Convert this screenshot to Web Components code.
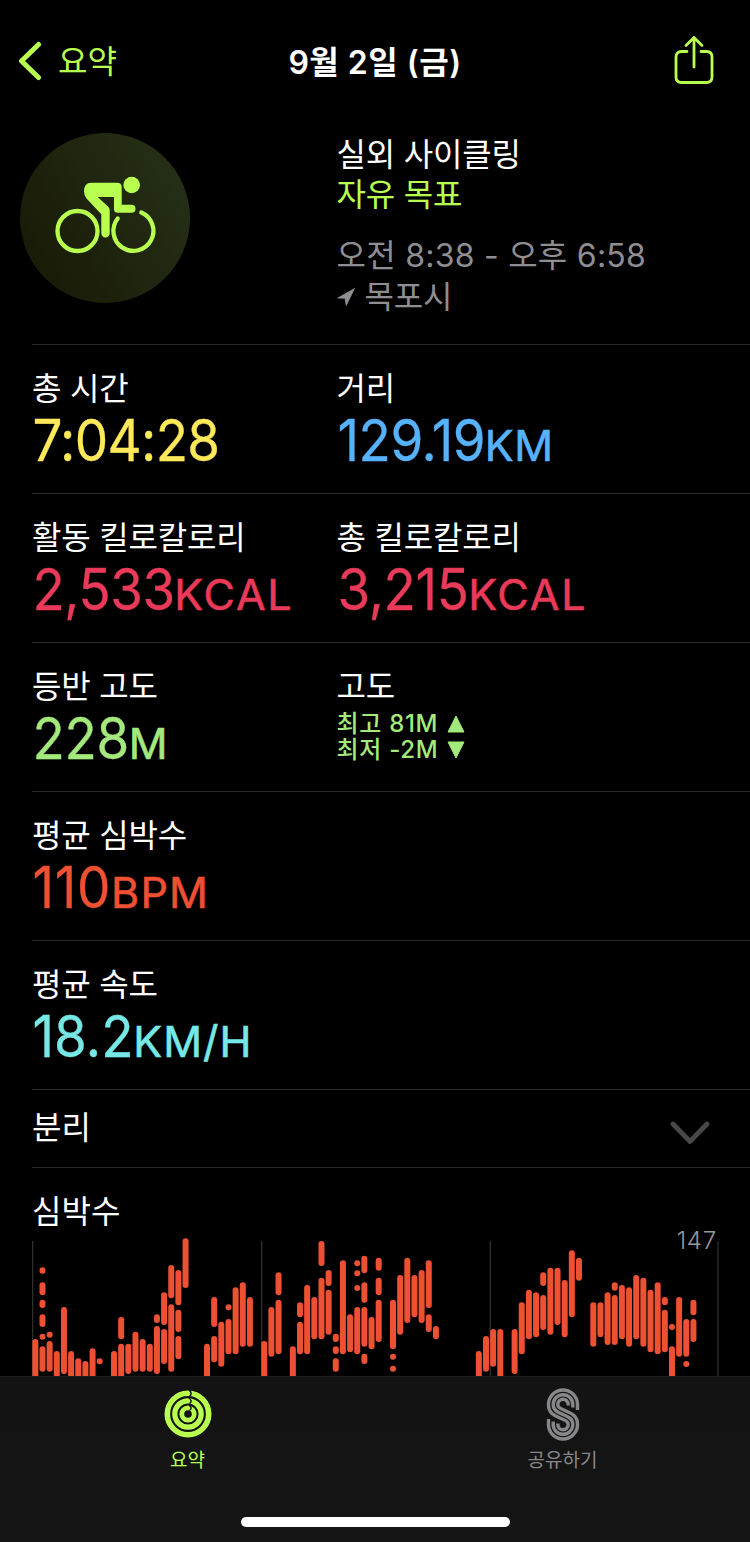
<!DOCTYPE html>
<html lang="ko">
<head>
<meta charset="utf-8">
<title>9월 2일 (금)</title>
<style>
    body {
        margin: 0;
        background: #000;
        color: #fff;
        font-family: Inter, "Noto Sans CJK KR", sans-serif;
        font-size: 32px;
        --lime: #b8ff50;
    }
</style>
</head>
<body>

<workout-page>
    <nav-bar slot="nav" back="요약">9월 2일 (금)</nav-bar>

    <workout-header slot="header">
        <span slot="type">실외 사이클링</span>
        <span slot="goal">자유 목표</span>
        <span slot="time">오전 8:38 - 오후 6:58</span>
        <span slot="place">목포시</span>
    </workout-header>

    <stat-row>
        <stat-item label="총 시간" value="7:04:28" color="#fee95b" spacing="-.7px"></stat-item>
        <stat-item label="거리" value="129.19" unit="KM" color="#56b2fb" spacing="-.5px" unit-spacing=".5px"></stat-item>
    </stat-row>
    <stat-row>
        <stat-item label="활동 킬로칼로리" value="2,533" unit="KCAL" color="#ea3a59" spacing="-.5px" unit-spacing="1.8px"></stat-item>
        <stat-item label="총 킬로칼로리" value="3,215" unit="KCAL" color="#ea3a59" spacing="-.4px" unit-spacing="1.8px"></stat-item>
    </stat-row>
    <stat-row>
        <stat-item label="등반 고도" value="228" unit="M" color="#a4e97c" spacing="-.3px"></stat-item>
        <stat-item label="고도" color="#a4e97c">
            <elevation-line>최고 81M</elevation-line>
            <elevation-line down>최저 -2M</elevation-line>
        </stat-item>
    </stat-row>
    <stat-row>
        <stat-item label="평균 심박수" value="110" unit="BPM" color="#ed5032" spacing=".8px" unit-spacing="1.2px"></stat-item>
    </stat-row>
    <stat-row>
        <stat-item label="평균 속도" value="18.2" unit="KM/H" color="#76e9e6" spacing=".1px" unit-spacing="1px"></stat-item>
    </stat-row>

    <split-row>분리</split-row>
    <heart-chart max="147">심박수</heart-chart>

    <tab-bar slot="tabs">
        <tab-item active>
            <svg slot="icon" width="48" height="48" viewBox="0 0 48 48" fill="none" stroke="#b8ff50">
                <circle cx="24" cy="24" r="20.700" stroke-width="5.600"/>
                <circle cx="24" cy="24" r="13.200" stroke-width="5.200"/>
                <circle cx="24" cy="24" r="6.200" stroke-width="4.800"/>
                <path d="M25 0Q29 3.300 25.500 6.600M25 8Q29 10.800 25.500 13.600M25 15.200Q29 17.800 25.500 20.500" stroke="#141312" stroke-width="1.500"/>
            </svg>
            요약
        </tab-item>
        <tab-item>
            <svg slot="icon" width="48" height="55" viewBox="0 0 48 55" fill="none" stroke="#87878a" stroke-width="3.400">
                <path d="M38.500 23V17.500A14.500 14.500 0 0 0 9.500 17.500C9.500 26 15 28.500 21 31S29.200 34.500 29.200 37.500A5.200 5.200 0 0 1 18.800 37.500V36.500"/>
                <path d="M33.800 20.500V17.500A9.800 9.800 0 0 0 14.200 17.500C14.200 23 18 25 24 27.500S33.800 32 33.800 37.500A9.800 9.800 0 0 1 14.200 37.500V34.500"/>
                <path d="M29.200 18.500V17.500A5.200 5.200 0 0 0 18.800 17.500C18.800 20.500 21 21.500 27 24S38.500 29 38.500 37.500A14.500 14.500 0 0 1 9.500 37.500V32"/>
            </svg>
            공유하기
        </tab-item>
    </tab-bar>
</workout-page>

<script>
// Attach an open shadow root holding the given markup
function render(host, html) {
    host.attachShadow({ mode: 'open' }).innerHTML = html
}

class WorkoutPage extends HTMLElement {
    constructor() {
        super()
        render(this, `
            <style>
                :host {
                    display: flex;
                    flex-direction: column;
                    width: 750px;
                    height: 1542px;
                    overflow: hidden;
                }
                main { flex: 1; min-height: 0; overflow: hidden; }
            </style>
            <slot name="nav"></slot>
            <main>
                <slot name="header"></slot>
                <slot></slot>
            </main>
            <slot name="tabs"></slot>
        `)
    }
}

class NavBar extends HTMLElement {
    constructor() {
        super()
        render(this, `
            <style>
                :host {
                    display: grid;
                    grid-template-columns: 1fr auto 1fr;
                    align-items: center;
                    height: 124px;
                    box-sizing: border-box;
                    padding: 0 18px 4px;
                }
                .back { display: flex; align-items: center; gap: 16px; color: var(--lime); }
                .back svg { margin-top: 2px; }
                .back span { margin-top: -2px; }
                .title { font-weight: 600; letter-spacing: .5px; white-space: nowrap; }
                .share { justify-self: end; display: block; margin-right: 18px; }
            </style>
            <div class="back">
                <svg width="24" height="40" viewBox="0 0 24 40" fill="none" stroke="currentColor" stroke-width="5" stroke-linecap="round" stroke-linejoin="round">
                    <path d="M20.500 3.500L3.500 20L20.500 36.500"/>
                </svg>
                <span></span>
            </div>
            <div class="title"><slot></slot></div>
            <svg class="share" width="40" height="50" viewBox="0 0 40 50" fill="none" stroke="var(--lime)" stroke-width="2.800" stroke-linecap="round" stroke-linejoin="round">
                <path d="M13 16.500H7.500Q2 16.500 2 22V42Q2 47.500 7.500 47.500H32.500Q38 47.500 38 42V22Q38 16.500 32.500 16.500H27"/>
                <path d="M20 32V2.500M12 10.500L20 2.500L28 10.500"/>
            </svg>
        `)
    }

    connectedCallback() {
        this.shadowRoot.querySelector('.back span').textContent = this.getAttribute('back')
    }
}

class WorkoutHeader extends HTMLElement {
    constructor() {
        super()
        render(this, `
            <style>
                :host {
                    display: grid;
                    grid-template-columns: 316.500px 1fr;
                    height: 220px;
                    box-sizing: border-box;
                    padding: 9px 0 0 20px;
                }
                .badge {
                    width: 170px;
                    height: 170px;
                    border-radius: 50%;
                    background: linear-gradient(60deg, #191b06 12%, #263017 92%);
                }
                .info { line-height: 40px; padding-top: 2px; white-space: nowrap; letter-spacing: -.2px; }
                .goal { color: var(--lime); }
                .time { margin-top: 21px; color: #8e8e93; letter-spacing: .25px; }
                .place { display: flex; align-items: center; gap: 10px; color: #8e8e93; margin-top: 1px; }
            </style>
            <svg class="badge" viewBox="0 0 170 170" fill="none" stroke="var(--lime)" stroke-linecap="round">
                <circle cx="57.500" cy="98" r="20" stroke-width="4.300"/>
                <path d="M97.700 85.500A20 20 0 1 0 121.300 79.500" stroke-width="4.300"/>
                <path d="M71 49.700H97Q101.700 49.700 101.700 54V71.700H111.500A4 4 0 0 1 111.500 79.700H97.500Q94 79.700 94 76.300V64H77.700L88.500 74Q89.700 75.300 89.700 77V100.300A4.200 4.200 0 0 1 81.300 100.300V81.300L66.500 65.500Q64 62.500 64 58.500Q64 49.700 71 49.700Z" fill="var(--lime)" stroke="none"/>
                <circle cx="111.700" cy="52" r="8.300" fill="var(--lime)" stroke="none"/>
            </svg>
            <div class="info">
                <div><slot name="type"></slot></div>
                <div class="goal"><slot name="goal"></slot></div>
                <div class="time"><slot name="time"></slot></div>
                <div class="place">
                    <svg width="18" height="18" viewBox="0 0 18 18"><path d="M17.500 .5L.8 10L8 10.300L9.200 17.500Z" fill="#8e8e93" stroke="#8e8e93" stroke-width=".8" stroke-linejoin="round"/></svg>
                    <slot name="place"></slot>
                </div>
            </div>
        `)
    }
}

class StatRow extends HTMLElement {
    constructor() {
        super()
        render(this, `
            <style>
                :host {
                    display: grid;
                    grid-template-columns: 304.500px 1fr;
                    height: 149px;
                    box-sizing: border-box;
                    margin-left: 32px;
                    border-top: 1px solid #2a2a2b;
                    padding-top: 24px;
                }
            </style>
            <slot></slot>
        `)
    }
}

class StatItem extends HTMLElement {
    constructor() {
        super()
        render(this, `
            <style>
                :host { display: block; white-space: nowrap; }
                .label { line-height: 40px; letter-spacing: -.2px; }
                /* digits are condensed, the unit is stretched back to its own width */
                .value {
                    font-size: 57px;
                    line-height: 64px;
                    padding-left: .5px;
                    -webkit-text-stroke: .3px currentColor;
                    transform: scaleX(.93);
                    transform-origin: left;
                }
                .unit {
                    display: inline-block;
                    font-size: 43px;
                    line-height: 50px;
                    -webkit-text-stroke: .6px currentColor;
                    transform: scaleX(1.075);
                    transform-origin: left;
                }
                .extra { padding-top: 4px; }
            </style>
            <div class="label"></div>
            <div class="value"><span class="number"></span><span class="unit"></span></div>
            <div class="extra"><slot></slot></div>
        `)
    }

    connectedCallback() {
        const value = this.shadowRoot.querySelector('.value')
        const number = this.shadowRoot.querySelector('.number')
        const unit = this.shadowRoot.querySelector('.unit')
        const color = this.getAttribute('color')

        this.shadowRoot.querySelector('.label').textContent = this.getAttribute('label')
        this.shadowRoot.querySelector('.extra').style.color = color

        if(this.getAttribute('value')) {
            value.style.color = color
            number.style.letterSpacing = this.getAttribute('spacing')
            number.textContent = this.getAttribute('value')
            unit.style.letterSpacing = this.getAttribute('unit-spacing')
            unit.textContent = this.getAttribute('unit')
        } else {
            value.remove()
        }
    }
}

class ElevationLine extends HTMLElement {
    constructor() {
        super()
        render(this, `
            <style>
                :host {
                    display: flex;
                    align-items: center;
                    gap: 9px;
                    height: 26px;
                    font-size: 24px;
                    line-height: 26px;
                    font-weight: 500;
                    letter-spacing: .7px;
                }
                :host([down]) svg { transform: rotate(180deg); }
            </style>
            <span><slot></slot></span>
            <svg width="18" height="20" viewBox="0 0 18 20"><path d="M9 2L17 18H1Z" fill="currentColor" stroke="currentColor" stroke-linejoin="round"/></svg>
        `)
    }
}

class SplitRow extends HTMLElement {
    constructor() {
        super()
        render(this, `
            <style>
                :host {
                    display: flex;
                    align-items: center;
                    justify-content: space-between;
                    height: 78px;
                    box-sizing: border-box;
                    margin-left: 32px;
                    border-top: 1px solid #2a2a2b;
                    padding: 0 40px 7px 0;
                }
                svg { margin-top: 15px; }
            </style>
            <span><slot></slot></span>
            <svg width="40" height="24" viewBox="0 0 40 24" fill="none" stroke="#48484a" stroke-width="4.800" stroke-linecap="round" stroke-linejoin="round">
                <path d="M3 3L20 20.500L37 3"/>
            </svg>
        `)
    }
}

// Heart rate ranges, [slot, top, bottom, top, bottom, ...]; END runs below the fold
const END = 600
const RANGES = [
    [0, 447, END], [1, 232, 251, 277, 316, 329, 354, 373, 411, 431, 448, 469, 545],
    [2, 425, 441, 453, 545], [3, 483, END], [4, 351, 552], [5, 483, END], [6, 505, END],
    [7, 513, END], [8, 475, END], [9, 505, 522], [11, 483, END], [12, 381, 448, 461, END],
    [13, 461, 552], [14, 425, 545], [15, 447, 545], [16, 461, 545], [17, 373, 399, 408, 552],
    [18, 307, 405, 417, 522], [19, 225, 325, 343, 545], [20, 240, 346, 359, 426, 438, 508],
    [21, 145, 294], [24, 461, END], [25, 321, 411, 438, 517], [26, 395, 530],
    [27, 343, 360, 387, 493], [28, 292, 493], [29, 277, 470], [30, 321, 470],
    [32, 453, END], [33, 351, 500], [34, 247, 316, 329, 493], [36, 469, END],
    [37, 337, 382, 395, 493], [38, 285, 493], [39, 321, 448], [40, 153, 228, 263, 448],
    [41, 240, 288, 299, 434], [42, 431, 456, 469, 492, 505, 545], [43, 211, 493],
    [44, 373, 487], [45, 211, 228, 241, 258, 285, 302, 351, 493],
    [46, 197, 250, 277, 338, 351, 470, 491, 522], [47, 381, 478],
    [48, 203, 242, 263, 316, 329, 456], [50, 329, 478, 491, 508, 527, 544], [51, 255, 434],
    [52, 203, 399], [53, 255, 382], [54, 240, 399], [55, 211, 354, 373, 426], [56, 408, 448],
    [62, 483, END], [63, 438, 545], [64, 417, 530], [65, 417, END], [67, 417, 552],
    [68, 337, 493], [69, 299, 448], [70, 307, 442], [71, 247, 288, 315, 420], [72, 233, 434],
    [73, 233, 405], [74, 270, 442], [75, 181, 382], [76, 203, 272], [78, 337, 470],
    [79, 337, 442], [80, 307, 465], [81, 277, 302, 315, 465], [82, 285, 448], [83, 292, 470],
    [84, 255, 448], [85, 263, 470], [86, 299, 487], [87, 277, 493], [88, 321, 346, 359, 487],
    [89, 402, 420, 469, END], [90, 321, 500], [91, 387, 500, 513, 530], [92, 329, 376, 387, 456],
]

class HeartChart extends HTMLElement {
    constructor() {
        super()
        render(this, `
            <style>
                :host {
                    display: block;
                    margin-left: 32px;
                    border-top: 1px solid #2a2a2b;
                    padding-top: 24px;
                }
                .title { line-height: 40px; height: 46px; }
                .plot { display: grid; }
                .plot > * { grid-area: 1 / 1; }
                .max { justify-self: end; margin: -12px 33px 0 0; line-height: 30px; font-size: 24px; font-weight: 300; letter-spacing: .8px; color: #98989d; }
            </style>
            <div class="title"><slot></slot></div>
            <div class="plot">
                <svg width="718" height="160" viewBox="96 144 2154 480"></svg>
                <span class="max"></span>
            </div>
        `)
    }

    connectedCallback() {
        const lines = [98, 785, 1471, 2154].map(x =>
            `<path d="M${x} 153V624" stroke="#2e2e30" stroke-width="4"/>`)
        const bars = RANGES.flatMap(([slot, ...ys]) => {
            const x = 106 + slot * 21.46 - 9
            const rects = []
            for (let i = 0; i < ys.length; i += 2) {
                // single readings are drawn as full dots
                const height = Math.max(18, ys[i + 1] - ys[i])
                rects.push(`<rect x="${x}" y="${ys[i]}" width="18" height="${height}" rx="9" fill="#ed5032"/>`)
            }
            return rects
        })

        this.shadowRoot.querySelector('svg').innerHTML = lines.concat(bars).join('')
        this.shadowRoot.querySelector('.max').textContent = this.getAttribute('max')
    }
}

class TabBar extends HTMLElement {
    constructor() {
        super()
        render(this, `
            <style>
                :host {
                    display: flex;
                    flex-direction: column;
                    justify-content: space-between;
                    align-items: center;
                    height: 166px;
                    box-sizing: border-box;
                    border-top: 1px solid #1f1f1f;
                    padding-bottom: 15px;
                    background: linear-gradient(#141313, #161515);
                }
                .tabs { display: grid; grid-template-columns: 1fr 1fr; width: 100%; }
                .home { width: 269px; height: 10px; border-radius: 5px; background: #fff; }
            </style>
            <div class="tabs"><slot></slot></div>
            <div class="home"></div>
        `)
    }
}

class TabItem extends HTMLElement {
    constructor() {
        super()
        render(this, `
            <style>
                :host {
                    display: flex;
                    flex-direction: column;
                    align-items: center;
                    font-size: 19px;
                    line-height: 24px;
                    color: #87878a;
                }
                :host([active]) { color: var(--lime); }
                .icon { display: flex; align-items: center; height: 70px; margin-top: 2px; }
            </style>
            <div class="icon"><slot name="icon"></slot></div>
            <span><slot></slot></span>
        `)
    }
}

window.customElements.define('workout-page', WorkoutPage)
window.customElements.define('nav-bar', NavBar)
window.customElements.define('workout-header', WorkoutHeader)
window.customElements.define('stat-row', StatRow)
window.customElements.define('stat-item', StatItem)
window.customElements.define('elevation-line', ElevationLine)
window.customElements.define('split-row', SplitRow)
window.customElements.define('heart-chart', HeartChart)
window.customElements.define('tab-bar', TabBar)
window.customElements.define('tab-item', TabItem)
</script>
</body>
</html>
